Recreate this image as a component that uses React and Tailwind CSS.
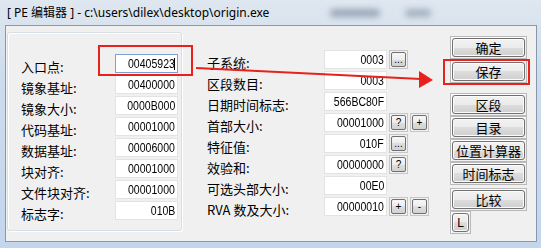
import React from 'react'

const LEFT = [
  ['入口点:', '00405923', true],
  ['镜象基址:', '00400000'],
  ['镜象大小:', '0000B000'],
  ['代码基址:', '00001000'],
  ['数据基址:', '00006000'],
  ['块对齐:', '00001000'],
  ['文件块对齐:', '00001000'],
  ['标志字:', '010B'],
]

const MID = [
  ['子系统:', '0003', ['...']],
  ['区段数目:', '0003', []],
  ['日期时间标志:', '566BC80F', []],
  ['首部大小:', '00001000', ['?', '+']],
  ['特征值:', '010F', ['...']],
  ['效验和:', '00000000', ['?']],
  ['可选头部大小:', '00E0', []],
  ['RVA 数及大小:', '00000010', ['+', '-']],
]

const CJK = "font-['Noto_Sans_CJK_SC','Noto_Sans',sans-serif]"

function Field({ value, focused }) {
  return (
    <div
      className={`relative w-[63px] h-[19px] bg-white border flex items-center justify-end pr-[2px] overflow-hidden ${
        focused ? 'border-[#7da2ce]' : 'border-[#e3e3e3]'
      }`}
    >
      <span className="inline-block font-['Liberation_Sans',Arial,sans-serif] text-[13px] leading-none text-black scale-x-[0.81] origin-right">
        {value}
      </span>
      {focused && <span className="absolute right-[2px] top-[3px] w-px h-[12px] bg-black" />}
    </div>
  )
}

function Mini({ children }) {
  return (
    <div className="w-[19px] h-[19px] border border-[#c6c6c6] p-px bg-[#f0f0f0]">
      <div className="h-full rounded-[2px] border border-[#707070] bg-[linear-gradient(#f7f7f7,#ececec_50%,#dedede_50%,#d2d2d2)] flex items-center justify-center font-['Liberation_Sans',Arial,sans-serif] text-[10px] leading-none text-black">
        {children}
      </div>
    </div>
  )
}

function Btn({ children, w = 'w-[77px]' }) {
  return (
    <div className={`${w} h-[23px] border border-[#b9b9b9] p-px bg-[#f0f0f0] shadow-[inset_1px_1px_0_#fff]`}>
      <div
        className={`h-full rounded-[3px] border border-[#707070] bg-[linear-gradient(#f2f2f2,#ebebeb_50%,#dddddd_50%,#cfcfcf)] shadow-[inset_0_0_0_1px_#fbfbfb] flex items-center justify-center ${CJK} text-[13px] leading-none text-black`}
      >
        {children}
      </div>
    </div>
  )
}

function Row({ label, value, focused, labelW, extra }) {
  return (
    <div className="flex items-center h-[21px]">
      <span className={`${labelW} mt-[5px] ${CJK} text-[13px] leading-[19px] text-black whitespace-nowrap`}>{label}</span>
      <Field value={value} focused={focused} />
      {extra && extra.length > 0 && (
        <div className="flex gap-[2px] ml-[2px]">
          {extra.map((b, i) => (
            <Mini key={i}>{b}</Mini>
          ))}
        </div>
      )}
    </div>
  )
}

export default function App() {
  return (
    <div className="relative w-[541px] h-[248px] overflow-hidden flex flex-col bg-[linear-gradient(#dfe7f0,#cddcec_30%,#c3d6ec)]">
      {/* title bar */}
      <div className="h-[25px] flex items-center pl-[7px]">
        <div className="w-[323px] font-['Noto_Sans','Noto_Sans_CJK_SC',sans-serif] text-[12px] text-black whitespace-nowrap">
          [ PE 编辑器 ] - c:\users\dilex\desktop\origin.exe
        </div>
        <div className="w-[50px] h-[8px] rounded-full bg-[#6c7c92] opacity-60 blur-[3px]" />
        <div className="ml-[25px] w-[26px] h-[8px] rounded-full bg-[#6c7c92] opacity-50 blur-[3px]" />
      </div>

      <div className="flex-1 flex pl-[5px] pr-[4px] pb-[6px]">
        {/* client area */}
        <div className="flex-1 flex border border-[#8797ad] bg-[#f0f0f0]">
          {/* left group box */}
          <div className="ml-px mt-[6px] w-[175px] h-[199px] rounded-[3px] border border-[#d5dfe5] shadow-[inset_1px_1px_0_#fff,1px_1px_0_#fff] pt-[20px] pl-[13px]">
            {LEFT.map(([l, v, f]) => (
              <Row key={l} label={l} value={v} focused={f} labelW="w-[94px]" />
            ))}
          </div>

          {/* middle column */}
          <div className="ml-[25px] mt-[23px] w-[222px]">
            {MID.map(([l, v, ex]) => (
              <Row key={l} label={l} value={v} labelW="w-[117px]" extra={ex} />
            ))}
          </div>

          {/* right buttons */}
          <div className="ml-[21px] mt-[10px] flex flex-col">
            <Btn>确定</Btn>
            <div className="mt-px">
              <Btn>保存</Btn>
            </div>
            <div className="mt-[10px]">
              <Btn>区段</Btn>
            </div>
            <Btn>目录</Btn>
            <Btn>位置计算器</Btn>
            <Btn>时间标志</Btn>
            <div className="mt-[3px]">
              <Btn>比较</Btn>
            </div>
            <Btn w="w-[21px]">
              <span className="font-['Liberation_Sans',Arial,sans-serif] text-[12px]">L</span>
            </Btn>
          </div>
        </div>
      </div>

      {/* red annotations */}
      <svg className="absolute inset-0 pointer-events-none" width="541" height="248" viewBox="0 0 541 248">
        <rect x="99" y="46" width="93" height="29" fill="none" stroke="#e8211c" strokeWidth="2" />
        <rect x="444" y="60" width="85" height="24" fill="none" stroke="#e8211c" strokeWidth="2" />
        <line x1="196" y1="68" x2="421" y2="79" stroke="#e8211c" strokeWidth="2" />
        <polygon points="419,71 433,80 419,88" fill="#e8211c" />
      </svg>
    </div>
  )
}
